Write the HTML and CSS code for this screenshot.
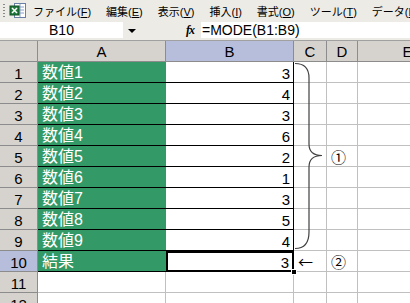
FILE: index.html
```html
<!DOCTYPE html>
<html lang="ja">
<head>
<meta charset="utf-8">
<link rel="stylesheet" href="styles.css">
</head>
<body>
<div class="app">
  <div class="menubar">
    <span class="grip"></span>
    <svg class="xlicon" width="18" height="17" viewBox="0 0 18 17">
      <rect x="5.5" y="1.5" width="11" height="14" fill="#fff" stroke="#6a7fa8"/>
      <path d="M8 5h7M8 8h7M8 11h7M11 2v13" stroke="#8aa0c8" stroke-width="1"/>
      <rect x="1" y="4" width="9" height="9" fill="#1f7a3a" stroke="#0e4f22"/>
      <path d="M3 6l5 5M8 6l-5 5" stroke="#fff" stroke-width="1.5"/>
    </svg>
    <span class="mi">ファイル(<u>F</u>)</span>
    <span class="mi">編集(<u>E</u>)</span>
    <span class="mi">表示(<u>V</u>)</span>
    <span class="mi">挿入(<u>I</u>)</span>
    <span class="mi">書式(<u>O</u>)</span>
    <span class="mi">ツール(<u>T</u>)</span>
    <span class="mi">データ(<u>D</u>)</span>
  </div>
  <div class="fbar">
    <div class="namebox">B10</div>
    <div class="dd"><span class="tri"></span></div>
    <div class="fx">fx</div>
    <div class="formula">=MODE(B1:B9)</div>
  </div>
  <div class="sheet">
    <div class="grid">
      <div class="ch corner"></div><div class="ch">A</div><div class="ch sel">B</div><div class="ch">C</div><div class="ch">D</div><div class="ch">E</div>

      <div class="rh">1</div><div class="c a">数値1</div><div class="c b">3</div><div class="c e"></div><div class="c e"></div><div class="c e"></div>
      <div class="rh">2</div><div class="c a">数値2</div><div class="c b">4</div><div class="c e"></div><div class="c e"></div><div class="c e"></div>
      <div class="rh">3</div><div class="c a">数値3</div><div class="c b">3</div><div class="c e"></div><div class="c e"></div><div class="c e"></div>
      <div class="rh">4</div><div class="c a">数値4</div><div class="c b">6</div><div class="c e"></div><div class="c e"></div><div class="c e"></div>
      <div class="rh">5</div><div class="c a">数値5</div><div class="c b">2</div><div class="c e"></div><div class="c e note">①</div><div class="c e"></div>
      <div class="rh">6</div><div class="c a">数値6</div><div class="c b">1</div><div class="c e"></div><div class="c e"></div><div class="c e"></div>
      <div class="rh">7</div><div class="c a">数値7</div><div class="c b">3</div><div class="c e"></div><div class="c e"></div><div class="c e"></div>
      <div class="rh">8</div><div class="c a">数値8</div><div class="c b">5</div><div class="c e"></div><div class="c e"></div><div class="c e"></div>
      <div class="rh">9</div><div class="c a">数値9</div><div class="c b">4</div><div class="c e"></div><div class="c e"></div><div class="c e"></div>
      <div class="rh sel">10</div><div class="c a">結果</div><div class="c b active">3<span class="handle"></span></div><div class="c e arrow">←</div><div class="c e note">②</div><div class="c e"></div>
      <div class="rh">11</div><div class="c e"></div><div class="c e"></div><div class="c e"></div><div class="c e"></div><div class="c e"></div>
      <div class="rh">12</div><div class="c e"></div><div class="c e"></div><div class="c e"></div><div class="c e"></div><div class="c e"></div>
    </div>
    <svg class="brace" width="40" height="200" viewBox="0 0 40 200">
      <path d="M1 1.5 Q15 1.5 15 16 L15 82 Q15 93.5 28 93.5 Q15 93.5 15 105 L15 170 Q15 186.5 1 186.5" fill="none" stroke="#404040" stroke-width="1.2"/>
    </svg>
  </div>
</div>
</body>
</html>
```

FILE: styles.css
```css
* { box-sizing: border-box; }
html, body { margin: 0; padding: 0; background: #fff; }
body { width: 410px; height: 303px; overflow: hidden; font-family: "Liberation Sans", "Noto Sans CJK JP", sans-serif; }
.app { width: 410px; overflow: hidden; }

.menubar {
  height: 21px;
  background: #ecebe6;
  display: flex;
  align-items: center;
  font-family: "Liberation Sans", "Noto Sans CJK JP", sans-serif;
  font-size: 11px;
  color: #000;
  white-space: nowrap;
  overflow: hidden;
}
.grip { width: 2px; height: 13px; margin: 0 4px 0 3px; flex: none; background: repeating-linear-gradient(#8a8a8a 0 1px, transparent 1px 3px); }
.xlicon { margin-right: 6px; flex: none; }
.mi { margin-right: 15px; flex: none; }
.mi u { text-decoration: underline; text-underline-offset: 1px; }

.fbar {
  height: 19px;
  background: #ecebe6;
  display: flex;
  align-items: stretch;
  padding: 1px 0 2px;
}
.namebox {
  width: 123px;
  background: #fff;
  text-align: center;
  font-size: 14px;
  line-height: 16px;
}
.dd { width: 63px; position: relative; }
.tri { position: absolute; left: 5px; top: 7px; width: 0; height: 0; border-left: 4px solid transparent; border-right: 4px solid transparent; border-top: 4px solid #000; }
.fx { width: 15px; font-family: "Liberation Serif", serif; font-style: italic; font-weight: bold; font-size: 12px; line-height: 16px; letter-spacing: -1px; }
.formula { flex: 1; background: #fff; font-size: 14px; line-height: 16px; padding-left: 1px; white-space: nowrap; }

.sheet { position: relative; border-top: 1px solid #a0a0a0; }
.grid {
  display: grid;
  grid-template-columns: 38px 128px 128px 33px 31px 100px;
  grid-template-rows: 21px repeat(12, 21px);
  width: 458px;
}
.ch, .rh {
  background: #d6d3ce;
  border-right: 1px solid #8c8c8c;
  border-bottom: 1px solid #8c8c8c;
  font-size: 15px;
  display: flex;
  align-items: center;
  justify-content: center;
  line-height: 1;
  color: #000;
}
.ch { padding-top: 1px; }
.rh { padding-top: 2px; }
.ch.sel, .rh.sel { background: #b6bedb; }
.c {
  border-right: 1px solid #c0c0c0;
  border-bottom: 1px solid #c0c0c0;
  font-size: 15px;
  line-height: 1;
  display: flex;
  align-items: flex-end;
  padding-bottom: 1px;
  white-space: nowrap;
}
.c.a {
  background: #339966;
  color: #fff;
  border-right: none;
  border-bottom: 1px solid #000;
  padding-left: 4px;
  font-size: 16px;
}
.c.b {
  justify-content: flex-end;
  padding-right: 3px;
  border-right: 1px solid #000;
  border-bottom: 1px solid #000;
}
.c.active { position: relative; outline: 2px solid #000; outline-offset: -2px; padding-right: 4px; }
.handle { position: absolute; right: -4px; bottom: -4px; width: 6px; height: 6px; background: #000; border: 1px solid #fff; }
.note { justify-content: flex-start; padding-left: 4px; align-items: center; font-size: 15px; font-family: "Noto Sans CJK JP", sans-serif; padding-bottom: 0; }
.arrow { align-items: center; padding-left: 4px; font-family: "Noto Sans CJK JP", sans-serif; font-size: 15px; padding-bottom: 0; }
.brace { position: absolute; left: 294px; top: 21px; }
```
